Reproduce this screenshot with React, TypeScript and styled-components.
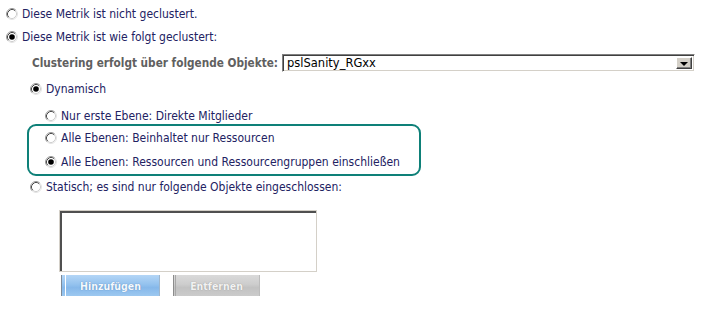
import React from "react";
import styled, { createGlobalStyle } from "styled-components";

const GlobalStyle = createGlobalStyle`
  html, body { margin: 0; padding: 0; background: #ffffff; }
  body { font-family: "DejaVu Sans Condensed", "DejaVu Sans", sans-serif; font-size: 12px; color: #222262; }
`;

const Page = styled.div`
  display: flex;
  flex-direction: column;
  padding: 3px 20px 0 0;
  width: 715px;
  box-sizing: border-box;
`;

const Row = styled.div<{ $indent: number; $height: number; $top?: number }>`
  display: flex;
  align-items: center;
  height: ${(p) => p.$height}px;
  padding-left: ${(p) => p.$indent}px;
  padding-top: ${(p) => p.$top ?? 0}px;
  box-sizing: content-box;
  white-space: nowrap;
`;

const Label = styled.span`
  margin-left: 4px;
  line-height: 14px;
`;

const ClusterRow = styled.div`
  display: flex;
  align-items: center;
  height: 28px;
  padding-left: 32px;
`;

const BoldLabel = styled.span`
  font-weight: 700;
  font-size: 11.7px;
  color: #606060;
  white-space: nowrap;
  flex: none;
`;

const Select = styled.div`
  flex: 1;
  margin-left: 4px;
  height: 18px;
  box-sizing: border-box;
  display: flex;
  align-items: stretch;
  border: 1px solid;
  border-color: #808080 #ffffff #ffffff #808080;
  box-shadow: inset 1px 1px 0 #404040, inset -1px -1px 0 #d4d0c8;
  padding: 2px;
  background: #ffffff;
`;

const SelectText = styled.span`
  flex: 1;
  font-family: "DejaVu Sans", sans-serif;
  font-size: 11.5px;
  color: #000000;
  line-height: 12px;
  padding-left: 2px;
`;

const DropButton = styled.span`
  width: 16px;
  box-sizing: border-box;
  background: #d4d0c8;
  border: 1px solid;
  border-color: #ffffff #404040 #404040 #ffffff;
  box-shadow: inset -1px -1px 0 #808080;
  display: flex;
  align-items: center;
  justify-content: center;
`;

const Arrow = styled.span`
  width: 0;
  height: 0;
  border-left: 4px solid transparent;
  border-right: 4px solid transparent;
  border-top: 4px solid #000000;
  margin-top: 1px;
`;

const GroupBox = styled.div`
  display: flex;
  flex-direction: column;
  margin-left: 27px;
  width: 394px;
  box-sizing: border-box;
  border: 2px solid #0e8078;
  border-radius: 9px;
`;

const ListBox = styled.div`
  margin: 12px 0 0 59px;
  width: 258px;
  height: 62px;
  box-sizing: border-box;
  background: #ffffff;
  border: 1px solid #d4d0c8;
  box-shadow: inset 2px 2px 0 #505050;
`;

const ButtonRow = styled.div`
  display: flex;
  gap: 13px;
  margin: 3px 0 0 61px;
`;

const ImgButton = styled.div<{ $width: number; $tone: "blue" | "gray" }>`
  position: relative;
  width: ${(p) => p.$width}px;
  height: 21px;
  box-sizing: border-box;
  display: flex;
  align-items: center;
  justify-content: center;
  font-family: "DejaVu Sans Condensed", sans-serif;
  font-weight: 700;
  font-size: 10.5px;
  color: ${(p) => (p.$tone === "blue" ? "#f4f9ff" : "#f2f2f2")};
  text-shadow: 0 0 1px ${(p) => (p.$tone === "blue" ? "#4a78a8" : "#8a8a8a")};
  border-left: 1px solid ${(p) => (p.$tone === "blue" ? "#7d8a98" : "#8c8c8c")};
  border-right: 1px solid ${(p) => (p.$tone === "blue" ? "#9fb6cc" : "#bcbcbc")};
  background: ${(p) =>
    p.$tone === "blue"
      ? "linear-gradient(#b4d6f6 0%, #94c2ee 45%, #86b8ea 60%, #9cc8f0 100%)"
      : "linear-gradient(#dadada 0%, #cdcdcd 45%, #c2c2c2 60%, #cbcbcb 100%)"};
  &::before {
    content: "";
    position: absolute;
    left: ${(p) => (p.$tone === "blue" ? 3 : 1)}px;
    top: 0;
    bottom: 0;
    width: 1px;
    background: ${(p) => (p.$tone === "blue" ? "#ffffff" : "#a8a8a8")};
  }
`;

function Radio({ checked }: { checked?: boolean }) {
  return (
    <svg width="12" height="12" viewBox="0 0 12 12" style={{ flex: "none" }}>
      <circle cx="6" cy="6" r="5" fill="#ffffff" />
      <path d="M2.11 9.89 A5.5 5.5 0 0 1 9.89 2.11" fill="none" stroke="#9a9a9a" strokeWidth="1" />
      <path d="M9.89 2.11 A5.5 5.5 0 0 1 2.11 9.89" fill="none" stroke="#e4e4e4" strokeWidth="1" />
      <path d="M2.82 9.18 A4.5 4.5 0 0 1 9.18 2.82" fill="none" stroke="#4a4a4a" strokeWidth="1" />
      <path d="M9.18 2.82 A4.5 4.5 0 0 1 2.82 9.18" fill="none" stroke="#d0d0d0" strokeWidth="1" />
      {checked && <circle cx="6" cy="6" r="2.8" fill="#000000" />}
    </svg>
  );
}

export default function App() {
  return (
    <Page>
      <GlobalStyle />
      <Row $indent={6} $height={22}>
        <Radio />
        <Label>Diese Metrik ist nicht geclustert.</Label>
      </Row>
      <Row $indent={6} $height={24}>
        <Radio checked />
        <Label>Diese Metrik ist wie folgt geclustert:</Label>
      </Row>
      <ClusterRow>
        <BoldLabel>Clustering erfolgt über folgende Objekte:</BoldLabel>
        <Select>
          <SelectText>pslSanity_RGxx</SelectText>
          <DropButton>
            <Arrow />
          </DropButton>
        </Select>
      </ClusterRow>
      <Row $indent={30} $height={24}>
        <Radio checked />
        <Label>Dynamisch</Label>
      </Row>
      <Row $indent={45} $height={17} $top={6}>
        <Radio />
        <Label>Nur erste Ebene: Direkte Mitglieder</Label>
      </Row>
      <GroupBox>
        <Row $indent={16} $height={24}>
          <Radio />
          <Label>Alle Ebenen: Beinhaltet nur Ressourcen</Label>
        </Row>
        <Row $indent={16} $height={24}>
          <Radio checked />
          <Label>Alle Ebenen: Ressourcen und Ressourcengruppen einschließen</Label>
        </Row>
      </GroupBox>
      <Row $indent={30} $height={22}>
        <Radio />
        <Label>Statisch; es sind nur folgende Objekte eingeschlossen:</Label>
      </Row>
      <ListBox />
      <ButtonRow>
        <ImgButton $width={99} $tone="blue">Hinzufügen</ImgButton>
        <ImgButton $width={87} $tone="gray">Entfernen</ImgButton>
      </ButtonRow>
    </Page>
  );
}
